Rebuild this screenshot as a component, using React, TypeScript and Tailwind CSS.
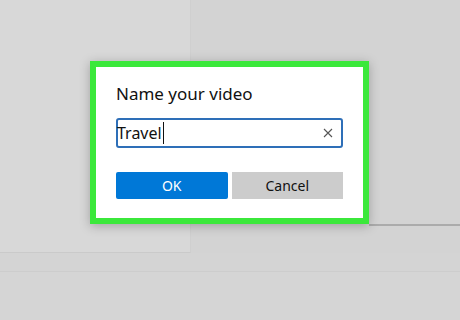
import React from 'react';

export default function App() {
  return (
    <div className="relative h-[320px] w-[460px] overflow-hidden bg-[#d5d5d5] font-['Noto_Sans',sans-serif]">
      <div className="flex h-[253px]">
        <div className="w-[191px] border-r border-[#cfcfcf] border-b border-b-[#cacaca] bg-[#d8d8d8]" />
        <div className="flex flex-1 flex-col bg-[#d3d3d3]">
          <div className="h-[224px]" />
          <div className="ml-[178px] h-[2px] bg-[#ababab]" />
        </div>
      </div>
      <div className="h-[19px] border-b border-[#cdcdcd] bg-[#d4d4d4]" />

      <div className="absolute left-[90px] top-[61px] w-[279px] border-[6px] border-[#3be83b] bg-white shadow-[0_2px_10px_rgba(0,0,0,0.25)]">
        <div className="px-[20px] pb-[19px] pt-[15px]">
          <h1 className="text-[17px] leading-[24px] text-[#111]">Name your video</h1>
          <div className="mt-[12px] flex h-[30px] items-center rounded-[3px] border-2 border-[#2e6fb8] pr-[8px]">
            <span className="-ml-[1px] text-[16px] leading-[20px] text-[#111]">Travel</span>
            <span className="ml-[1px] h-[22px] w-px bg-[#111]" />
            <span className="flex-1" />
            <svg width="10" height="10" viewBox="0 0 10 10" className="text-[#555]">
              <path d="M1 1L9 9M9 1L1 9" stroke="currentColor" strokeWidth="1.1" />
            </svg>
          </div>
          <div className="mt-[24px] grid grid-cols-2 gap-[4px]">
            <button className="h-[27px] rounded-[2px] bg-[#0078d7] text-[14px] text-white">OK</button>
            <button className="h-[27px] bg-[#cccccc] text-[14px] text-[#111]">Cancel</button>
          </div>
        </div>
      </div>
    </div>
  );
}
